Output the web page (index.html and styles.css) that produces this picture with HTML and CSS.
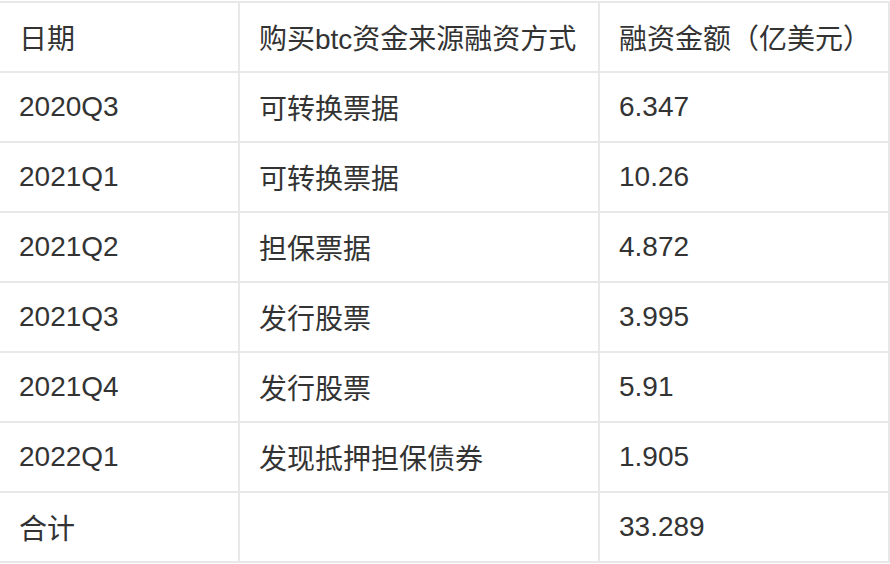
FILE: index.html
```html
<!DOCTYPE html>
<html lang="zh-CN">
<head>
<meta charset="utf-8">
<title>融资表</title>
<link rel="stylesheet" href="styles.css">
</head>
<body>
<table class="fin-table">
  <colgroup>
    <col class="c-date">
    <col class="c-src">
    <col class="c-amt">
  </colgroup>
  <thead>
    <tr><th>日期</th><th>购买btc资金来源融资方式</th><th>融资金额（亿美元）</th></tr>
  </thead>
  <tbody>
    <tr><td>2020Q3</td><td>可转换票据</td><td>6.347</td></tr>
    <tr><td>2021Q1</td><td>可转换票据</td><td>10.26</td></tr>
    <tr><td>2021Q2</td><td>担保票据</td><td>4.872</td></tr>
    <tr><td>2021Q3</td><td>发行股票</td><td>3.995</td></tr>
    <tr><td>2021Q4</td><td>发行股票</td><td>5.91</td></tr>
    <tr><td>2022Q1</td><td>发现抵押担保债券</td><td>1.905</td></tr>
    <tr><td>合计</td><td></td><td>33.289</td></tr>
  </tbody>
</table>
</body>
</html>
```

FILE: styles.css
```css
html, body {
  margin: 0;
  padding: 0;
  background: #ffffff;
}
body {
  padding-top: 1px;
}
.fin-table {
  width: 890px;
  table-layout: fixed;
  border-collapse: separate;
  border-spacing: 0;
  border-top: 2px solid #e8e8e8;
  font-family: "Liberation Sans", "Noto Sans CJK SC", sans-serif;
  font-size: 28px;
  color: #333333;
}
.c-date { width: 240px; }
.c-src { width: 360px; }
.c-amt { width: 290px; }
.fin-table th,
.fin-table td {
  box-sizing: border-box;
  height: 70px;
  padding: 0 19px;
  text-align: left;
  vertical-align: middle;
  font-weight: normal;
  border-right: 2px solid #e8e8e8;
  border-bottom: 2px solid #e8e8e8;
  white-space: nowrap;
}
```
